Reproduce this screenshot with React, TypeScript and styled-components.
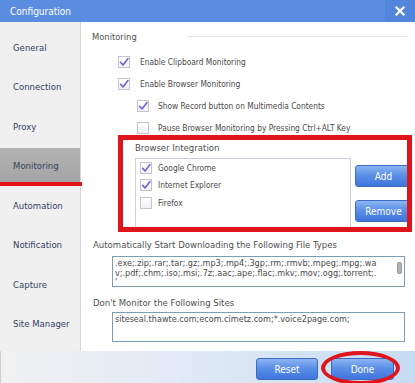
import React from "react";
import styled, { createGlobalStyle } from "styled-components";

const FONT = `"DejaVu Sans Condensed", "DejaVu Sans", Tahoma, sans-serif`;

const Global = createGlobalStyle`
  html, body { margin: 0; padding: 0; background: #fff; }
  body { font-family: ${FONT}; }
  * { box-sizing: border-box; }
`;

const Window = styled.div`
  position: relative;
  width: 415px;
  height: 383px;
  overflow: hidden;
  display: flex;
  flex-direction: column;
  background: #fff;
  font-family: ${FONT};
`;

const TitleBar = styled.div`
  height: 22px;
  flex: none;
  display: flex;
  align-items: center;
  background: #5a8de0;
  color: #fff;
  padding-left: 10px;
`;

const Title = styled.div`
  flex: 1;
  font-size: 10px;
`;

const CloseBtn = styled.div`
  width: 30px;
  height: 22px;
  display: flex;
  align-items: center;
  justify-content: center;
  background: #5385da;
`;

const Body = styled.div`
  flex: 1;
  display: flex;
  min-height: 0;
`;

const Sidebar = styled.div`
  width: 81px;
  flex: none;
  background: #f0f0f0;
  border-right: 1px solid #d8d8d8;
  padding-top: 7px;
  display: flex;
  flex-direction: column;
  gap: 3.5px;
`;

const NavItem = styled.div<{ $active?: boolean }>`
  height: 36px;
  display: flex;
  align-items: center;
  padding-left: 13px;
  font-size: 9.5px;
  color: #34425c;
  background: ${(p) => (p.$active ? "linear-gradient(#b2b2b2, #a4a4a4)" : "transparent")};
`;

const Content = styled.div`
  flex: 1;
  display: flex;
  flex-direction: column;
  padding-left: 11px;
  color: #4a4a4a;
`;

const SectionHeader = styled.div`
  height: 29px;
  display: flex;
  align-items: center;
`;

const SectionTitle = styled.div`
  width: 96px;
  font-size: 9.3px;
  color: #505050;
`;

const SectionLine = styled.div`
  flex: 1;
  height: 1px;
  background: #e3e3e3;
  margin-right: 8px;
`;

const OptionRow = styled.div<{ $level: number }>`
  height: 22px;
  display: flex;
  align-items: center;
  gap: ${(p) => (p.$level === 1 ? 10 : 9)}px;
  padding-left: ${(p) => (p.$level === 1 ? 26 : 45)}px;
  font-size: 8.3px;
  color: #4a4a4a;
`;

const Box = styled.span`
  width: 12px;
  height: 12px;
  flex: none;
  border: 1px solid #c3c5d2;
  background: linear-gradient(#ffffff, #f2f2f5);
  display: inline-flex;
  align-items: center;
  justify-content: center;
`;

const Group = styled.div`
  padding-left: 43px;
  margin-top: 1px;
`;

const GroupLabel = styled.div`
  height: 14px;
  display: flex;
  align-items: center;
  font-size: 9.5px;
  color: #505050;
`;

const GroupRow = styled.div`
  display: flex;
  margin-top: 4px;
  gap: 4px;
`;

const ListBox = styled.div`
  width: 216px;
  height: 70px;
  border: 1px solid #cdd0d8;
  padding-left: 4px;
  display: flex;
  flex-direction: column;
`;

const ListRow = styled.div`
  height: 17.5px;
  display: flex;
  align-items: center;
  gap: 6px;
  font-size: 8.3px;
  color: #4a4a4a;
`;

const SideButtons = styled.div`
  display: flex;
  flex-direction: column;
  gap: 13px;
  padding-top: 7px;
`;

const BlueButton = styled.div<{ $w: number }>`
  width: ${(p) => p.$w}px;
  height: 22px;
  flex: none;
  display: flex;
  align-items: center;
  justify-content: center;
  color: #fff;
  font-size: 10px;
  border: 1px solid #3b6cc4;
  border-radius: 3px;
  background: linear-gradient(#8cb5f2 0%, #5c8fe6 45%, #3f75dc 100%);
`;

const FieldLabel = styled.div<{ $mt: number }>`
  height: 14px;
  margin-top: ${(p) => p.$mt}px;
  padding-left: 1px;
  display: flex;
  align-items: center;
  font-size: 9.5px;
  color: #505050;
`;

const TextBox = styled.div<{ $mt: number; $h: number }>`
  margin-left: 20px;
  margin-top: ${(p) => p.$mt}px;
  width: 293px;
  height: ${(p) => p.$h}px;
  border: 1px solid #7b9fb2;
  display: flex;
  overflow: hidden;
`;

const TextLines = styled.div`
  flex: 1;
  padding: 2px 0 0 2px;
  font-size: 9px;
  line-height: 9.5px;
  color: #4a4a4a;
  white-space: pre;
  overflow: hidden;
`;

const ScrollThumb = styled.div`
  width: 5px;
  height: 12px;
  margin: 5px 2px 0 2px;
  border-radius: 2px;
  background: #b4b4b4;
  border: 1px solid #9a9a9a;
`;

const BottomBar = styled.div`
  height: 32px;
  flex: none;
  display: flex;
  justify-content: flex-end;
  align-items: flex-end;
  gap: 13px;
  padding: 0 21px 3px 0;
  border-left: 1px solid #cfcfcf;
  background: linear-gradient(90deg, #f1f1f1 0%, #e2ebf5 40%, #c6dcf3 100%);
`;

const RedUnderline = styled.div`
  position: absolute;
  left: 0;
  top: 182px;
  width: 82px;
  height: 4px;
  background: #e0141b;
`;

const RedBox = styled.div`
  position: absolute;
  left: 118px;
  top: 135px;
  width: 294px;
  height: 97px;
  border: 5px solid #e0141b;
`;

const RedEllipse = styled.div`
  position: absolute;
  left: 321px;
  top: 351px;
  width: 79px;
  height: 34px;
  border: 4px solid #e0141b;
  border-radius: 50%;
`;

function Check({ checked }: { checked?: boolean }) {
  return (
    <Box>
      {checked && (
        <svg width="10" height="10" viewBox="0 0 10 10">
          <path d="M1.6 5.3 L4 7.9 L9 1.6" fill="none" stroke="#6d64d6" strokeWidth="1.6" strokeLinecap="round" strokeLinejoin="round" />
        </svg>
      )}
    </Box>
  );
}

const navItems = ["General", "Connection", "Proxy", "Monitoring", "Automation", "Notification", "Capture", "Site Manager"];

export default function App() {
  return (
    <>
      <Global />
      <Window>
        <TitleBar>
          <Title>Configuration</Title>
          <CloseBtn>
            <svg width="10" height="10" viewBox="0 0 10 10">
              <path d="M1.5 1.5 L8.5 8.5 M8.5 1.5 L1.5 8.5" stroke="#fff" strokeWidth="2.2" strokeLinecap="square" />
            </svg>
          </CloseBtn>
        </TitleBar>
        <Body>
          <Sidebar>
            {navItems.map((n) => (
              <NavItem key={n} $active={n === "Monitoring"}>
                {n}
              </NavItem>
            ))}
          </Sidebar>
          <Content>
            <SectionHeader>
              <SectionTitle>Monitoring</SectionTitle>
              <SectionLine />
            </SectionHeader>
            <OptionRow $level={1}>
              <Check checked />
              Enable Clipboard Monitoring
            </OptionRow>
            <OptionRow $level={1}>
              <Check checked />
              Enable Browser Monitoring
            </OptionRow>
            <OptionRow $level={2}>
              <Check checked />
              Show Record button on Multimedia Contents
            </OptionRow>
            <OptionRow $level={2}>
              <Check />
              Pause Browser Monitoring by Pressing Ctrl+ALT Key
            </OptionRow>
            <Group>
              <GroupLabel>Browser Integration</GroupLabel>
              <GroupRow>
                <ListBox>
                  <ListRow>
                    <Check checked />
                    Google Chrome
                  </ListRow>
                  <ListRow>
                    <Check checked />
                    Internet Explorer
                  </ListRow>
                  <ListRow>
                    <Check />
                    Firefox
                  </ListRow>
                </ListBox>
                <SideButtons>
                  <BlueButton $w={57}>Add</BlueButton>
                  <BlueButton $w={57}>Remove</BlueButton>
                </SideButtons>
              </GroupRow>
            </Group>
            <FieldLabel $mt={9}>Automatically Start Downloading the Following File Types</FieldLabel>
            <TextBox $mt={5} $h={31}>
              <TextLines>
                {".exe;.zip;.rar;.tar;.gz;.mp3;.mp4;.3gp;.rm;.rmvb;.mpeg;.mpg;.wa\nv;.pdf;.chm;.iso;.msi;.7z;.aac;.ape;.flac;.mkv;.mov;.ogg;.torrent;.\n'"}
              </TextLines>
              <ScrollThumb />
            </TextBox>
            <FieldLabel $mt={8}>Don't Monitor the Following Sites</FieldLabel>
            <TextBox $mt={3} $h={30}>
              <TextLines>siteseal.thawte.com;ecom.cimetz.com;*.voice2page.com;</TextLines>
            </TextBox>
          </Content>
        </Body>
        <BottomBar>
          <BlueButton $w={62}>Reset</BlueButton>
          <BlueButton $w={63}>Done</BlueButton>
        </BottomBar>
        <RedUnderline />
        <RedBox />
        <RedEllipse />
      </Window>
    </>
  );
}
